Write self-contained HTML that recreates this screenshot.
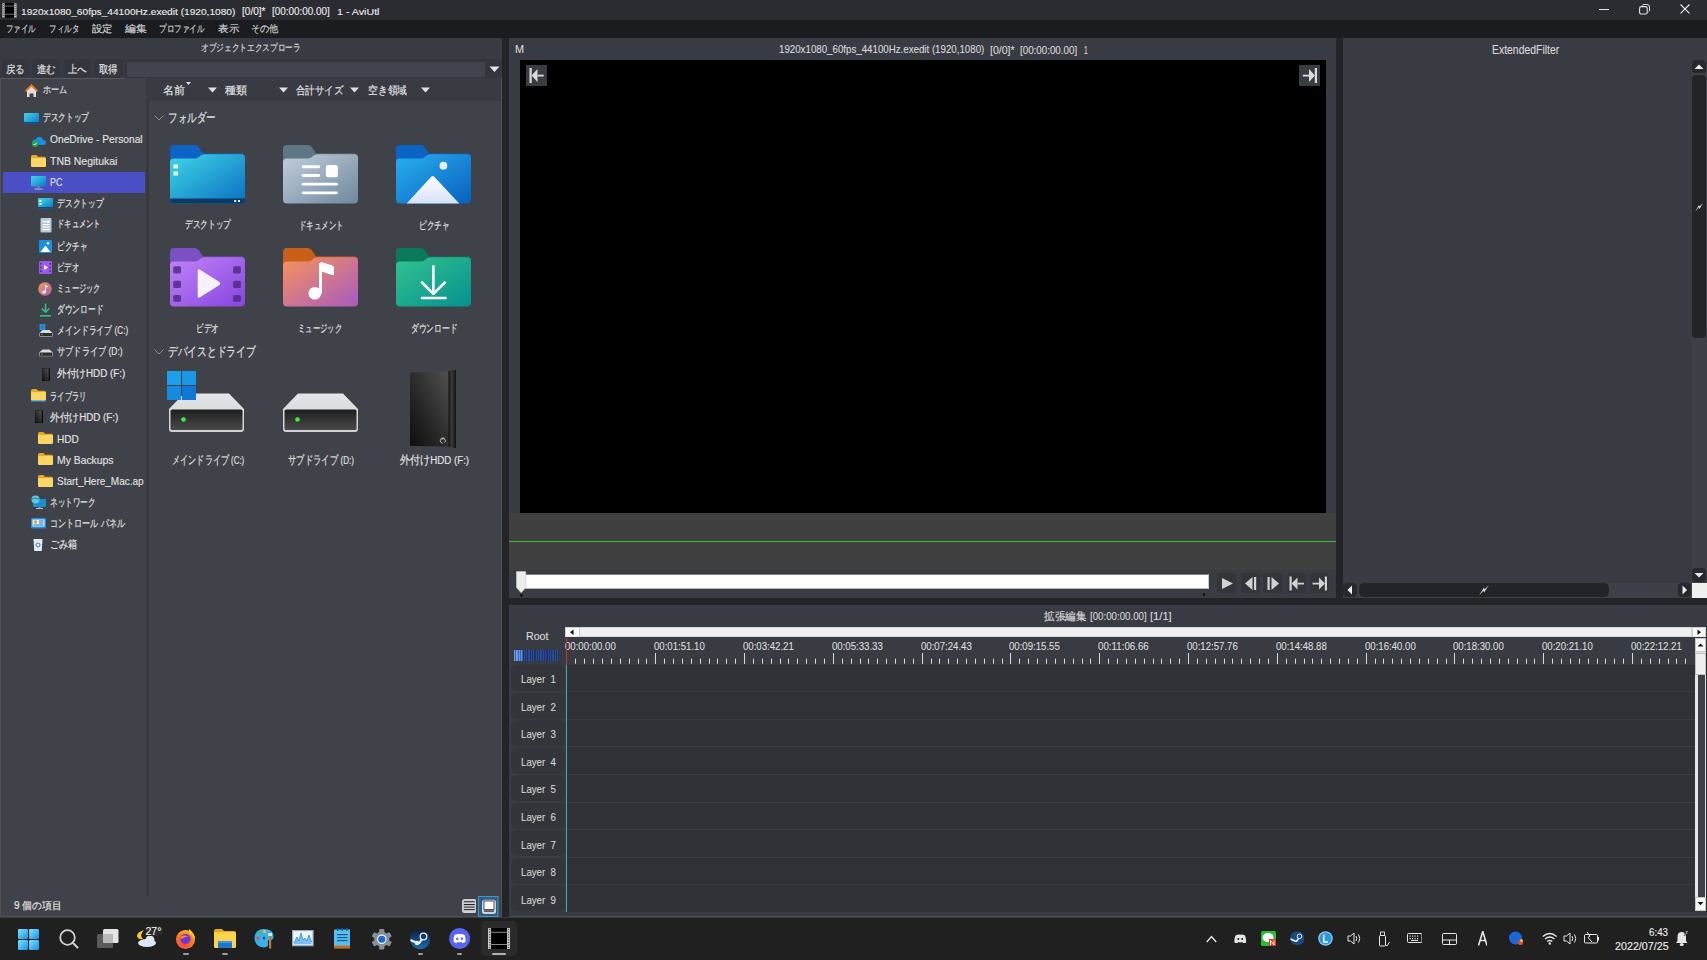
<!DOCTYPE html>
<html><head><meta charset="utf-8">
<style>
*{box-sizing:border-box;margin:0;padding:0}
html,body{width:1707px;height:960px;overflow:hidden;background:#222428;font-family:"Liberation Sans",sans-serif;color:#dcdcdc;font-size:12px}
.a{position:absolute}
.t{position:absolute;white-space:nowrap;line-height:1;transform-origin:0 0}
.j{-webkit-text-stroke:0.18px currentColor}
.l{-webkit-text-stroke:0.12px currentColor}
</style></head><body>
<div class="a" style="left:0px;top:0px;width:1707px;height:20px;background:#2b2c31;"></div>
<svg class="a" style="left:1.5px;top:2.5px;" width="15" height="15" viewBox="0 0 15 15"><rect x="0.4" y="0.2" width="2.4" height="14.5" fill="#c8c8c8"/><rect x="12.1" y="0.2" width="2.4" height="14.5" fill="#c8c8c8"/><rect x="2.8" y="0.2" width="9.3" height="14.5" fill="#000"/><rect x="2.8" y="2.6" width="9.3" height="0.9" fill="#7a7a7a"/><rect x="2.8" y="10.7" width="9.3" height="0.9" fill="#7a7a7a"/><rect x="1" y="0.9" width="1.2" height="1" fill="#555"/><rect x="12.7" y="0.9" width="1.2" height="1" fill="#555"/><rect x="1" y="3.1" width="1.2" height="1" fill="#555"/><rect x="12.7" y="3.1" width="1.2" height="1" fill="#555"/><rect x="1" y="5.3" width="1.2" height="1" fill="#555"/><rect x="12.7" y="5.3" width="1.2" height="1" fill="#555"/><rect x="1" y="7.5" width="1.2" height="1" fill="#555"/><rect x="12.7" y="7.5" width="1.2" height="1" fill="#555"/><rect x="1" y="9.7" width="1.2" height="1" fill="#555"/><rect x="12.7" y="9.7" width="1.2" height="1" fill="#555"/><rect x="1" y="11.9" width="1.2" height="1" fill="#555"/><rect x="12.7" y="11.9" width="1.2" height="1" fill="#555"/><rect x="1" y="14.1" width="1.2" height="1" fill="#555"/><rect x="12.7" y="14.1" width="1.2" height="1" fill="#555"/></svg>
<div class="t l" style="left:21.00px;top:6.72px;font-size:9.86px;color:#ececec;font-family:'Liberation Sans',sans-serif;font-weight:normal;transform:scaleX(1.0308);">1920x1080_60fps_44100Hz.exedit (1920,1080)</div>
<div class="t l" style="left:242.00px;top:6.52px;font-size:10.10px;color:#ececec;font-family:'Liberation Sans',sans-serif;font-weight:normal;transform:scaleX(0.9967);">[0/0]*</div>
<div class="t l" style="left:272.00px;top:6.52px;font-size:10.10px;color:#ececec;font-family:'Liberation Sans',sans-serif;font-weight:normal;transform:scaleX(0.9790);">[00:00:00.00]</div>
<div class="t l" style="left:337.00px;top:6.72px;font-size:9.86px;color:#ececec;font-family:'Liberation Sans',sans-serif;font-weight:normal;transform:scaleX(1.0837);">1 - AviUtl</div>
<div class="a" style="left:1599px;top:9px;width:10px;height:1px;background:#e6e6e6;"></div>
<svg class="a" style="left:1638.5px;top:4px;" width="11" height="10.5" viewBox="0 0 11 10.5"><rect x="0.6" y="2.6" width="7.6" height="7.4" rx="1.6" fill="none" stroke="#e6e6e6" stroke-width="1.1"/><path d="M3 1.6 Q3.4 0.5 5 0.5 H8 Q10.5 0.5 10.5 3 V6 Q10.5 7.4 9.6 7.8" fill="none" stroke="#e6e6e6" stroke-width="0.95"/></svg>
<svg class="a" style="left:1680px;top:4px;" width="10" height="9.8" viewBox="0 0 10 9.8"><path d="M0.5 0.5 L9.5 9.3 M9.5 0.5 L0.5 9.3" stroke="#eeeeee" stroke-width="1.1"/></svg>
<div class="a" style="left:0px;top:20px;width:1707px;height:18px;background:#1b1c20;"></div>
<div class="t j" style="left:6.20px;top:24.00px;font-size:10.41px;color:#d4d4d4;font-family:'Liberation Sans',sans-serif;font-weight:normal;transform:scaleX(0.7450);">ファイル</div>
<div class="t j" style="left:48.90px;top:24.00px;font-size:10.41px;color:#d4d4d4;font-family:'Liberation Sans',sans-serif;font-weight:normal;transform:scaleX(0.7525);">フィルタ</div>
<div class="t j" style="left:91.70px;top:24.00px;font-size:10.41px;color:#d4d4d4;font-family:'Liberation Sans',sans-serif;font-weight:normal;transform:scaleX(1.0400);">設定</div>
<div class="t j" style="left:125.00px;top:24.00px;font-size:10.41px;color:#d4d4d4;font-family:'Liberation Sans',sans-serif;font-weight:normal;transform:scaleX(1.0850);">編集</div>
<div class="t j" style="left:159.00px;top:24.00px;font-size:10.41px;color:#d4d4d4;font-family:'Liberation Sans',sans-serif;font-weight:normal;transform:scaleX(0.7617);">プロファイル</div>
<div class="t j" style="left:218.00px;top:24.00px;font-size:10.41px;color:#d4d4d4;font-family:'Liberation Sans',sans-serif;font-weight:normal;transform:scaleX(1.0500);">表示</div>
<div class="t j" style="left:251.00px;top:24.00px;font-size:10.41px;color:#d4d4d4;font-family:'Liberation Sans',sans-serif;font-weight:normal;transform:scaleX(0.9200);">その他</div>
<div class="a" style="left:0px;top:38px;width:502px;height:879px;background:#383b42;"></div>
<div class="t j" style="left:201.30px;top:42.90px;font-size:10.41px;color:#dadada;font-family:'Liberation Sans',sans-serif;font-weight:normal;transform:scaleX(0.7677);">オブジェクトエクスプローラ</div>
<div class="a" style="left:1px;top:59px;width:28px;height:19px;background:#33363c;border-radius:5px"></div>
<div class="t j" style="left:6.00px;top:64.00px;font-size:10.71px;color:#e2e2e2;font-family:'Liberation Sans',sans-serif;font-weight:normal;transform:scaleX(0.8636);">戻る</div>
<div class="a" style="left:32px;top:59px;width:28px;height:19px;background:#33363c;border-radius:5px"></div>
<div class="t j" style="left:37.00px;top:64.00px;font-size:10.71px;color:#e2e2e2;font-family:'Liberation Sans',sans-serif;font-weight:normal;transform:scaleX(0.8636);">進む</div>
<div class="a" style="left:63px;top:59px;width:28px;height:19px;background:#33363c;border-radius:5px"></div>
<div class="t j" style="left:68.00px;top:64.00px;font-size:10.71px;color:#e2e2e2;font-family:'Liberation Sans',sans-serif;font-weight:normal;transform:scaleX(0.8636);">上へ</div>
<div class="a" style="left:94px;top:59px;width:29px;height:19px;background:#33363c;border-radius:5px"></div>
<div class="t j" style="left:99.00px;top:64.00px;font-size:10.71px;color:#e2e2e2;font-family:'Liberation Sans',sans-serif;font-weight:normal;transform:scaleX(0.8636);">取得</div>
<div class="a" style="left:124px;top:59px;width:378px;height:19px;background:#33363c;border-radius:5px"></div>
<div class="a" style="left:127px;top:62px;width:358px;height:14.5px;background:#41444c;"></div>
<svg class="a" style="left:489px;top:66px;" width="11" height="7" viewBox="0 0 11 7"><path d="M0.5 0.5 H10.5 L5.5 6 Z" fill="#dfe6ee"/></svg>
<div class="a" style="left:1px;top:78px;width:501px;height:838px;background:#3f4249;"></div>
<div class="a" style="left:1px;top:78px;width:123px;height:1px;background:#55585e;"></div>
<div class="a" style="left:146px;top:78px;width:3px;height:818px;background:#383a41;"></div>
<div class="a" style="left:149px;top:78px;width:353px;height:23px;background:#383b42;"></div>
<div class="a" style="left:0px;top:78px;width:1px;height:839px;background:#505257;"></div>
<div class="a" style="left:501px;top:78px;width:1px;height:839px;background:#505257;"></div>
<div class="a" style="left:0px;top:916px;width:502px;height:1px;background:#505257;"></div>
<div class="t j" style="left:163.00px;top:84.50px;font-size:10.71px;color:#e2e2e2;font-family:'Liberation Sans',sans-serif;font-weight:normal;">名前</div>
<svg class="a" style="left:208px;top:87px;" width="9" height="6" viewBox="0 0 9 6"><path d="M0 0.5 H9 L4.5 5.5 Z" fill="#e0e0e0"/></svg>
<div class="t j" style="left:225.00px;top:84.50px;font-size:10.71px;color:#e2e2e2;font-family:'Liberation Sans',sans-serif;font-weight:normal;">種類</div>
<svg class="a" style="left:279px;top:87px;" width="9" height="6" viewBox="0 0 9 6"><path d="M0 0.5 H9 L4.5 5.5 Z" fill="#e0e0e0"/></svg>
<div class="t j" style="left:296.00px;top:84.50px;font-size:10.71px;color:#e2e2e2;font-family:'Liberation Sans',sans-serif;font-weight:normal;transform:scaleX(0.8545);">合計サイズ</div>
<svg class="a" style="left:350px;top:87px;" width="9" height="6" viewBox="0 0 9 6"><path d="M0 0.5 H9 L4.5 5.5 Z" fill="#e0e0e0"/></svg>
<div class="t j" style="left:368.00px;top:84.50px;font-size:10.71px;color:#e2e2e2;font-family:'Liberation Sans',sans-serif;font-weight:normal;transform:scaleX(0.8864);">空き領域</div>
<svg class="a" style="left:421px;top:87px;" width="9" height="6" viewBox="0 0 9 6"><path d="M0 0.5 H9 L4.5 5.5 Z" fill="#e0e0e0"/></svg>
<svg class="a" style="left:186px;top:82px;" width="5" height="4" viewBox="0 0 5 4"><path d="M0 0 H5 L2.5 3 Z" fill="#e0e0e0"/></svg>
<div class="a" style="left:3px;top:171.5px;width:142px;height:21.3px;background:#4a4fc6;"></div>
<svg class="a" style="left:24px;top:83px;" width="15" height="14" viewBox="0 0 15 14"><path d="M7.5 1 L14 7.5 L12.5 9 L7.5 4 L2.5 9 L1 7.5 Z" fill="#f07c14"/><path d="M3 8 L7.5 3.8 L12 8 V14 H9.5 V10.5 H5.5 V14 H3 Z" fill="#dedede"/></svg>
<div class="t j" style="left:42.80px;top:84.60px;font-size:9.59px;color:#e2e2e2;font-family:'Liberation Sans',sans-serif;font-weight:normal;transform:scaleX(0.8033);">ホーム</div>
<svg class="a" style="left:24px;top:113px;" width="15" height="11" viewBox="0 0 15 11"><defs><linearGradient id="dk" x1="0" y1="0" x2="1" y2="1"><stop offset="0" stop-color="#45d8e8"/><stop offset="1" stop-color="#0b76c8"/></linearGradient></defs><rect x="0" y="0" width="15" height="10.5" rx="1.2" fill="url(#dk)"/><rect x="0" y="9" width="15" height="1.5" fill="#0a4a80"/></svg>
<div class="t j" style="left:42.80px;top:112.30px;font-size:11.12px;color:#e2e2e2;font-family:'Liberation Sans',sans-serif;font-weight:normal;transform:scaleX(0.6970);">デスクトップ</div>
<svg class="a" style="left:31px;top:135px;" width="15" height="12" viewBox="0 0 15 12"><path d="M4 9 Q1 9 1.5 6 Q2 4 4.5 4.5 Q6 1 9.5 2 Q12 3 12 5 Q15 5 15 8 Q15 10 12.5 10 H4 Z" fill="#1e8fe0"/><circle cx="4" cy="9" r="3" fill="#1fae3a"/><path d="M2.5 9 L3.6 10.1 L5.6 7.8" stroke="#fff" stroke-width="0.9" fill="none"/></svg>
<div class="t l" style="left:50.10px;top:134.18px;font-size:11.20px;color:#e2e2e2;font-family:'Liberation Sans',sans-serif;font-weight:normal;transform:scaleX(0.9136);">OneDrive - Personal</div>
<svg class="a" style="left:31px;top:155px;" width="15" height="12" viewBox="0 0 15 12"><path d="M0 1.5 Q0 0 1.5 0 H5.5 L7 1.8 H13.5 Q15 1.8 15 3.3 V5 H0 Z" fill="#e9a91a"/><rect x="0" y="3" width="15" height="9" rx="1.2" fill="#fcd664"/></svg>
<div class="t l" style="left:50.10px;top:156.28px;font-size:11.20px;color:#e2e2e2;font-family:'Liberation Sans',sans-serif;font-weight:normal;transform:scaleX(0.9345);">TNB Negitukai</div>
<svg class="a" style="left:31px;top:176px;" width="15" height="14" viewBox="0 0 15 14"><defs><linearGradient id="pcg" x1="0" y1="0" x2="1" y2="1"><stop offset="0" stop-color="#45d8e8"/><stop offset="1" stop-color="#0b76c8"/></linearGradient></defs><rect x="0" y="0" width="15" height="10.5" rx="1" fill="url(#pcg)"/><rect x="6.5" y="10.5" width="2" height="2" fill="#888"/><rect x="3.5" y="12.5" width="8" height="1.2" fill="#aaa"/></svg>
<div class="t l" style="left:50.10px;top:177.48px;font-size:11.20px;color:#e2e2e2;font-family:'Liberation Sans',sans-serif;font-weight:normal;transform:scaleX(0.7976);">PC</div>
<svg class="a" style="left:38px;top:198px;" width="15" height="11" viewBox="0 0 15 11"><rect x="0" y="0" width="15" height="10.5" rx="1.2" fill="url(#dk)"/><rect x="1.5" y="2" width="2" height="2" fill="#fff"/><rect x="1.5" y="5" width="2" height="2" fill="#fff"/><rect x="0" y="9" width="15" height="1.5" fill="#0a4a80"/></svg>
<div class="t j" style="left:56.70px;top:197.60px;font-size:11.12px;color:#e2e2e2;font-family:'Liberation Sans',sans-serif;font-weight:normal;transform:scaleX(0.7061);">デスクトップ</div>
<svg class="a" style="left:40px;top:218px;" width="12" height="15" viewBox="0 0 12 15"><rect x="0.5" y="0" width="11" height="14.5" rx="1" fill="#b9c8d8"/><g fill="#fff"><rect x="2.5" y="3" width="4" height="1.2"/><rect x="7" y="2.5" width="2.5" height="2.5"/><rect x="2.5" y="6" width="7" height="1.1"/><rect x="2.5" y="8.5" width="7" height="1.1"/><rect x="2.5" y="11" width="7" height="1.1"/></g></svg>
<div class="t j" style="left:57.40px;top:219.10px;font-size:10.20px;color:#e2e2e2;font-family:'Liberation Sans',sans-serif;font-weight:normal;transform:scaleX(0.7283);">ドキュメント</div>
<svg class="a" style="left:39px;top:240px;" width="13" height="13" viewBox="0 0 13 13"><rect x="0" y="0" width="13" height="13" rx="1" fill="#1a8fe0"/><path d="M1.5 12 L6.5 5.5 L11.5 12 Z" fill="#fff"/><circle cx="9" cy="3.3" r="1.2" fill="#fff"/></svg>
<div class="t j" style="left:57.40px;top:240.50px;font-size:10.71px;color:#e2e2e2;font-family:'Liberation Sans',sans-serif;font-weight:normal;transform:scaleX(0.6841);">ピクチャ</div>
<svg class="a" style="left:39px;top:261px;" width="13" height="13" viewBox="0 0 13 13"><rect x="0" y="0" width="13" height="13" rx="1.2" fill="#9b5ae8"/><g fill="#4f2a7e"><rect x="1" y="2" width="1.6" height="1.6"/><rect x="1" y="5.7" width="1.6" height="1.6"/><rect x="1" y="9.4" width="1.6" height="1.6"/><rect x="10.4" y="2" width="1.6" height="1.6"/><rect x="10.4" y="5.7" width="1.6" height="1.6"/><rect x="10.4" y="9.4" width="1.6" height="1.6"/></g><path d="M5 4 L9 6.5 L5 9 Z" fill="#fff"/></svg>
<div class="t j" style="left:57.40px;top:261.50px;font-size:10.71px;color:#e2e2e2;font-family:'Liberation Sans',sans-serif;font-weight:normal;transform:scaleX(0.6636);">ビデオ</div>
<svg class="a" style="left:38px;top:282px;" width="14" height="14" viewBox="0 0 14 14"><defs><linearGradient id="mg" x1="0" y1="0" x2="1" y2="1"><stop offset="0" stop-color="#f59a5a"/><stop offset="1" stop-color="#b05ab0"/></linearGradient></defs><circle cx="7" cy="7" r="6.8" fill="url(#mg)"/><ellipse cx="6" cy="10" rx="1.8" ry="1.5" fill="#fff"/><rect x="7" y="3" width="1" height="7" fill="#fff"/><path d="M7.5 3 L10 4.5 L9.5 5.5 L7.5 4.5Z" fill="#fff"/></svg>
<div class="t j" style="left:57.40px;top:283.30px;font-size:10.82px;color:#e2e2e2;font-family:'Liberation Sans',sans-serif;font-weight:normal;transform:scaleX(0.6606);">ミュージック</div>
<svg class="a" style="left:39px;top:303px;" width="13" height="14" viewBox="0 0 13 14"><g stroke="#2ec08f" stroke-width="1.6" fill="none"><path d="M6.5 0.5 V9"/><path d="M2.8 5.5 L6.5 9.2 L10.2 5.5"/><path d="M1 12.8 H12"/></g></svg>
<div class="t j" style="left:57.40px;top:303.90px;font-size:11.33px;color:#e2e2e2;font-family:'Liberation Sans',sans-serif;font-weight:normal;transform:scaleX(0.7045);">ダウンロード</div>
<svg class="a" style="left:38.5px;top:324px;" width="14" height="13" viewBox="0 0 14 13"><g fill="#1a98e8"><rect x="0.5" y="0" width="2.8" height="2.8"/><rect x="3.6" y="0" width="2.8" height="2.8"/><rect x="0.5" y="3.1" width="2.8" height="2.8"/><rect x="3.6" y="3.1" width="2.8" height="2.8"/></g><path d="M3.5 6 H10.5 L13.5 9 V12.5 H0.5 V9 Z" fill="#d9dadd"/><rect x="1" y="9" width="12" height="3" fill="#2e2e2e"/><circle cx="3" cy="10.5" r="0.6" fill="#3f3"/></svg>
<div class="t j" style="left:57.40px;top:324.90px;font-size:11.33px;color:#e2e2e2;font-family:'Liberation Sans',sans-serif;font-weight:normal;transform:scaleX(0.7180);">メインドライブ (C:)</div>
<svg class="a" style="left:38.5px;top:349.3px;" width="14" height="8" viewBox="0 0 14 8"><path d="M3.5 0.5 H10.5 L13.5 3.3 V7.3 H0.5 V3.3 Z" fill="#d9dadd"/><rect x="1" y="3.5" width="12" height="3.4" fill="#2e2e2e"/><circle cx="3" cy="5.2" r="0.6" fill="#3f3"/></svg>
<div class="t j" style="left:57.40px;top:345.80px;font-size:11.43px;color:#e2e2e2;font-family:'Liberation Sans',sans-serif;font-weight:normal;transform:scaleX(0.7437);">サブドライブ (D:)</div>
<svg class="a" style="left:41.5px;top:367.7px;" width="8" height="13" viewBox="0 0 8 13"><defs><linearGradient id="hdg" x1="1" y1="0" x2="0" y2="1"><stop offset="0" stop-color="#505050"/><stop offset="1" stop-color="#111"/></linearGradient></defs><rect x="0" y="0.3" width="8" height="12.7" rx="0.8" fill="#0c0c0c"/><rect x="0.3" y="0.6" width="6.4" height="12" rx="0.6" fill="url(#hdg)"/></svg>
<div class="t j" style="left:57.40px;top:367.70px;font-size:11.22px;color:#e2e2e2;font-family:'Liberation Sans',sans-serif;font-weight:normal;transform:scaleX(0.8770);">外付けHDD (F:)</div>
<svg class="a" style="left:31px;top:389px;" width="15" height="13" viewBox="0 0 15 13"><path d="M0 1.5 Q0 0 1.5 0 H5.5 L7 1.8 H13.5 Q15 1.8 15 3.3 V5 H0 Z" fill="#e9a91a"/><rect x="0" y="3" width="15" height="9" rx="1.2" fill="#fcd664"/><rect x="0" y="11.5" width="15" height="1.5" fill="#1a7ad6"/></svg>
<div class="t j" style="left:50.10px;top:390.50px;font-size:10.71px;color:#e2e2e2;font-family:'Liberation Sans',sans-serif;font-weight:normal;transform:scaleX(0.6618);">ライブラリ</div>
<svg class="a" style="left:34.6px;top:410px;" width="8" height="13" viewBox="0 0 8 13"><defs><linearGradient id="hdg" x1="1" y1="0" x2="0" y2="1"><stop offset="0" stop-color="#505050"/><stop offset="1" stop-color="#111"/></linearGradient></defs><rect x="0" y="0.3" width="8" height="12.7" rx="0.8" fill="#0c0c0c"/><rect x="0.3" y="0.6" width="6.4" height="12" rx="0.6" fill="url(#hdg)"/></svg>
<div class="t j" style="left:50.10px;top:411.70px;font-size:11.02px;color:#e2e2e2;font-family:'Liberation Sans',sans-serif;font-weight:normal;transform:scaleX(0.8863);">外付けHDD (F:)</div>
<svg class="a" style="left:38px;top:432px;" width="15" height="12" viewBox="0 0 15 12"><path d="M0 1.5 Q0 0 1.5 0 H5.5 L7 1.8 H13.5 Q15 1.8 15 3.3 V5 H0 Z" fill="#e9a91a"/><rect x="0" y="3" width="15" height="9" rx="1.2" fill="#fcd664"/></svg>
<div class="t l" style="left:57.40px;top:433.58px;font-size:11.20px;color:#e2e2e2;font-family:'Liberation Sans',sans-serif;font-weight:normal;transform:scaleX(0.9031);">HDD</div>
<svg class="a" style="left:38px;top:453px;" width="15" height="12" viewBox="0 0 15 12"><path d="M0 1.5 Q0 0 1.5 0 H5.5 L7 1.8 H13.5 Q15 1.8 15 3.3 V5 H0 Z" fill="#e9a91a"/><rect x="0" y="3" width="15" height="9" rx="1.2" fill="#fcd664"/></svg>
<div class="t l" style="left:57.40px;top:454.68px;font-size:11.20px;color:#e2e2e2;font-family:'Liberation Sans',sans-serif;font-weight:normal;transform:scaleX(0.9272);">My Backups</div>
<svg class="a" style="left:38px;top:475px;" width="15" height="12" viewBox="0 0 15 12"><path d="M0 1.5 Q0 0 1.5 0 H5.5 L7 1.8 H13.5 Q15 1.8 15 3.3 V5 H0 Z" fill="#e9a91a"/><rect x="0" y="3" width="15" height="9" rx="1.2" fill="#fcd664"/></svg>
<div class="t l" style="left:57.40px;top:475.98px;font-size:11.20px;color:#e2e2e2;font-family:'Liberation Sans',sans-serif;font-weight:normal;transform:scaleX(0.8926);">Start_Here_Mac.ap</div>
<svg class="a" style="left:31px;top:495px;" width="15" height="14" viewBox="0 0 15 14"><rect x="2" y="4" width="13" height="8" rx="1" fill="#1a8fd0"/><circle cx="4.5" cy="4.5" r="4" fill="#5ac8f0"/><path d="M1 4 Q4 2 8 4" stroke="#2a8a4a" stroke-width="1" fill="none"/><rect x="7.5" y="12" width="2" height="1.5" fill="#999"/><rect x="5" y="13" width="7" height="1" fill="#bbb"/></svg>
<div class="t j" style="left:50.10px;top:496.50px;font-size:10.71px;color:#e2e2e2;font-family:'Liberation Sans',sans-serif;font-weight:normal;transform:scaleX(0.6909);">ネットワーク</div>
<svg class="a" style="left:31px;top:518px;" width="15" height="11" viewBox="0 0 15 11"><rect x="0" y="0" width="15" height="10.5" rx="1" fill="#1e90e0"/><rect x="1.5" y="1.5" width="12" height="7" fill="#e8f4ff"/><circle cx="4.5" cy="4" r="1.8" fill="#f0a030"/><rect x="8" y="2.5" width="4.5" height="1" fill="#1e70c0"/><rect x="8" y="4.5" width="4.5" height="1" fill="#1e70c0"/><rect x="2.5" y="6.5" width="10" height="1" fill="#1e70c0"/></svg>
<div class="t j" style="left:50.10px;top:518.00px;font-size:10.71px;color:#e2e2e2;font-family:'Liberation Sans',sans-serif;font-weight:normal;transform:scaleX(0.7325);">コントロール パネル</div>
<svg class="a" style="left:33px;top:538px;" width="10" height="13" viewBox="0 0 10 13"><path d="M0.5 1 H9.5 L8.8 12.5 Q8.7 13 8 13 H2 Q1.3 13 1.2 12.5 Z" fill="#e8ecf0"/><circle cx="5" cy="7" r="2" fill="none" stroke="#1e88e0" stroke-width="1"/></svg>
<div class="t j" style="left:50.10px;top:538.90px;font-size:10.82px;color:#e2e2e2;font-family:'Liberation Sans',sans-serif;font-weight:normal;transform:scaleX(0.8273);">ごみ箱</div>
<svg class="a" style="left:154px;top:115px;" width="10" height="6" viewBox="0 0 10 6"><path d="M0.5 0.5 L5 5 L9.5 0.5" stroke="#8a8d94" stroke-width="1" fill="none"/></svg>
<div class="t j" style="left:167.50px;top:112.20px;font-size:12.96px;color:#e2e2e2;font-family:'Liberation Sans',sans-serif;font-weight:normal;transform:scaleX(0.7338);">フォルダー</div>
<svg class="a" style="left:170px;top:144.5px;" width="75" height="59" viewBox="0 0 75 59"><defs><linearGradient id="g1" x1="0" y1="0" x2="1" y2="1"><stop offset="0" stop-color="#3fd6e3"/><stop offset="1" stop-color="#0a6fc6"/></linearGradient></defs><path d="M0 4 Q0 0 4 0 H25 Q27 0 28.5 1.8 L33 8.6 H71 Q75 8.6 75 12.6 V40 H0 Z" fill="#0e63c6"/><path d="M0 17.5 Q0 13.6 4 13.6 H25 Q27 13.6 28.5 12.2 L31 10.2 Q33 9.2 35 9.2 H71 Q75 9.2 75 13.2 V54.5 Q75 58.5 71 58.5 H4 Q0 58.5 0 54.5 Z" fill="url(#g1)"/><path d="M0 53.5 H75 V54.5 Q75 58.5 71 58.5 H4 Q0 58.5 0 54.5 Z" fill="#0b3a66"/><rect x="3.4" y="19.5" width="4.7" height="4" fill="#e8f6ff"/><rect x="3.4" y="26.5" width="4.7" height="4" fill="#e8f6ff"/><rect x="64.2" y="55" width="2" height="2" fill="#e8f6ff"/><rect x="68" y="55" width="2" height="2" fill="#e8f6ff"/></svg>
<svg class="a" style="left:283px;top:144.5px;" width="75" height="59" viewBox="0 0 75 59"><defs><linearGradient id="g2" x1="0" y1="0" x2="1" y2="1"><stop offset="0" stop-color="#c2cfdc"/><stop offset="1" stop-color="#6f879e"/></linearGradient></defs><path d="M0 4 Q0 0 4 0 H25 Q27 0 28.5 1.8 L33 8.6 H71 Q75 8.6 75 12.6 V40 H0 Z" fill="#5f7684"/><path d="M0 17.5 Q0 13.6 4 13.6 H25 Q27 13.6 28.5 12.2 L31 10.2 Q33 9.2 35 9.2 H71 Q75 9.2 75 13.2 V54.5 Q75 58.5 71 58.5 H4 Q0 58.5 0 54.5 Z" fill="url(#g2)"/><g fill="#ffffff"><rect x="18.7" y="20.3" width="18.4" height="2.9" rx="1.45"/><rect x="18.7" y="29" width="18.4" height="2.9" rx="1.45"/><rect x="18.7" y="37.7" width="36.2" height="2.9" rx="1.45"/><rect x="18.7" y="46.4" width="36.2" height="2.9" rx="1.45"/><rect x="42.9" y="19.9" width="12" height="12.4" rx="2.2"/></g></svg>
<svg class="a" style="left:395.5px;top:144.5px;" width="75" height="59" viewBox="0 0 75 59"><defs><linearGradient id="g3" x1="0" y1="0" x2="1" y2="1"><stop offset="0" stop-color="#2ab0f0"/><stop offset="1" stop-color="#0760bf"/></linearGradient></defs><path d="M0 4 Q0 0 4 0 H25 Q27 0 28.5 1.8 L33 8.6 H71 Q75 8.6 75 12.6 V40 H0 Z" fill="#0b63c4"/><path d="M0 17.5 Q0 13.6 4 13.6 H25 Q27 13.6 28.5 12.2 L31 10.2 Q33 9.2 35 9.2 H71 Q75 9.2 75 13.2 V54.5 Q75 58.5 71 58.5 H4 Q0 58.5 0 54.5 Z" fill="url(#g3)"/><defs><linearGradient id="g4" x1="0" y1="0" x2="0" y2="1"><stop offset="0" stop-color="#ffffff"/><stop offset="1" stop-color="#d6e2f8"/></linearGradient></defs><path d="M10.6 58.5 L35.2 31.8 Q36.7 30.2 38.2 31.8 L63.2 58.5 Z" fill="url(#g4)"/><circle cx="47.4" cy="20.7" r="3.9" fill="#e8eef8"/></svg>
<svg class="a" style="left:170px;top:248.3px;" width="75" height="59" viewBox="0 0 75 59"><defs><linearGradient id="g5" x1="0" y1="0" x2="1" y2="1"><stop offset="0" stop-color="#c084f8"/><stop offset="1" stop-color="#8644de"/></linearGradient></defs><path d="M0 4 Q0 0 4 0 H25 Q27 0 28.5 1.8 L33 8.6 H71 Q75 8.6 75 12.6 V40 H0 Z" fill="#7b50c2"/><path d="M0 17.5 Q0 13.6 4 13.6 H25 Q27 13.6 28.5 12.2 L31 10.2 Q33 9.2 35 9.2 H71 Q75 9.2 75 13.2 V54.5 Q75 58.5 71 58.5 H4 Q0 58.5 0 54.5 Z" fill="url(#g5)"/><g fill="#4a2a80" opacity="0.8"><rect x="3.2" y="18.2" width="7.8" height="7.3" rx="1.5"/><rect x="3.2" y="32.7" width="7.8" height="7.3" rx="1.5"/><rect x="3.2" y="47" width="7.8" height="6.8" rx="1.5"/><rect x="63.1" y="18.2" width="7.8" height="7.3" rx="1.5"/><rect x="63.1" y="32.7" width="7.8" height="7.3" rx="1.5"/><rect x="63.1" y="47" width="7.8" height="6.8" rx="1.5"/></g><path d="M27.7 23 Q27.7 20.5 30 21.8 L49.5 34 Q51 35.5 49.5 37 L30 49.2 Q27.7 50.5 27.7 48 Z" fill="#f6f2ff"/></svg>
<svg class="a" style="left:283px;top:248.3px;" width="75" height="59" viewBox="0 0 75 59"><defs><linearGradient id="g6" x1="0" y1="0" x2="1" y2="1"><stop offset="0" stop-color="#f7935a"/><stop offset="1" stop-color="#a85ac0"/></linearGradient></defs><path d="M0 4 Q0 0 4 0 H25 Q27 0 28.5 1.8 L33 8.6 H71 Q75 8.6 75 12.6 V40 H0 Z" fill="#c8601a"/><path d="M0 17.5 Q0 13.6 4 13.6 H25 Q27 13.6 28.5 12.2 L31 10.2 Q33 9.2 35 9.2 H71 Q75 9.2 75 13.2 V54.5 Q75 58.5 71 58.5 H4 Q0 58.5 0 54.5 Z" fill="url(#g6)"/><g fill="#ffffff"><circle cx="31.8" cy="45.3" r="6.3"/><rect x="36" y="15.5" width="3" height="30"/><path d="M36.5 15.5 Q37 13.8 39 14.3 L49.5 17.5 Q51 18 51 20 V25.5 Q51 27.5 49 27 L38.5 23.5 Z"/></g></svg>
<svg class="a" style="left:395.5px;top:248.3px;" width="75" height="59" viewBox="0 0 75 59"><defs><linearGradient id="g7" x1="0" y1="0" x2="1" y2="1"><stop offset="0" stop-color="#33c291"/><stop offset="1" stop-color="#05918f"/></linearGradient></defs><path d="M0 4 Q0 0 4 0 H25 Q27 0 28.5 1.8 L33 8.6 H71 Q75 8.6 75 12.6 V40 H0 Z" fill="#0b7a5a"/><path d="M0 17.5 Q0 13.6 4 13.6 H25 Q27 13.6 28.5 12.2 L31 10.2 Q33 9.2 35 9.2 H71 Q75 9.2 75 13.2 V54.5 Q75 58.5 71 58.5 H4 Q0 58.5 0 54.5 Z" fill="url(#g7)"/><g fill="none" stroke="#ffffff" stroke-width="2.6" stroke-linecap="round" stroke-linejoin="round"><path d="M37.4 18.2 V45.8"/><path d="M26 34.5 L37.4 45.9 L48.8 34.5"/><path d="M26 50 H49.6"/></g></svg>
<div class="t j" style="left:184.80px;top:219.30px;font-size:11.43px;color:#e2e2e2;font-family:'Liberation Sans',sans-serif;font-weight:normal;transform:scaleX(0.6970);">デスクトップ</div>
<div class="t j" style="left:298.50px;top:219.50px;font-size:11.22px;color:#e2e2e2;font-family:'Liberation Sans',sans-serif;font-weight:normal;transform:scaleX(0.6788);">ドキュメント</div>
<div class="t j" style="left:418.70px;top:219.50px;font-size:11.22px;color:#e2e2e2;font-family:'Liberation Sans',sans-serif;font-weight:normal;transform:scaleX(0.6932);">ピクチャ</div>
<div class="t j" style="left:196.20px;top:323.00px;font-size:11.43px;color:#e2e2e2;font-family:'Liberation Sans',sans-serif;font-weight:normal;transform:scaleX(0.6909);">ビデオ</div>
<div class="t j" style="left:298.30px;top:323.00px;font-size:11.43px;color:#e2e2e2;font-family:'Liberation Sans',sans-serif;font-weight:normal;transform:scaleX(0.6682);">ミュージック</div>
<div class="t j" style="left:410.70px;top:323.00px;font-size:11.43px;color:#e2e2e2;font-family:'Liberation Sans',sans-serif;font-weight:normal;transform:scaleX(0.7045);">ダウンロード</div>
<svg class="a" style="left:154px;top:349px;" width="10" height="6" viewBox="0 0 10 6"><path d="M0.5 0.5 L5 5 L9.5 0.5" stroke="#8a8d94" stroke-width="1" fill="none"/></svg>
<div class="t j" style="left:167.60px;top:346.20px;font-size:12.86px;color:#e2e2e2;font-family:'Liberation Sans',sans-serif;font-weight:normal;transform:scaleX(0.7487);">デバイスとドライブ</div>
<svg class="a" style="left:167px;top:369px;" width="80" height="64" viewBox="0 0 80 64"><defs><linearGradient id="g8" x1="0" y1="0" x2="0" y2="1"><stop offset="0" stop-color="#1e1e1e"/><stop offset="1" stop-color="#4a4a4a"/></linearGradient><linearGradient id="g9" x1="0" y1="0" x2="0" y2="1"><stop offset="0" stop-color="#e4e5e8"/><stop offset="1" stop-color="#cfd0d4"/></linearGradient></defs><path d="M17 24.5 H62 L77 40 V60 Q77 63 74 63 H5 Q2 63 2 60 V40 Z" fill="url(#g9)"/><rect x="3.5" y="40.5" width="72" height="20.5" rx="1.5" fill="url(#g8)"/><circle cx="16.5" cy="50.5" r="2.3" fill="#3df03d"/><g><rect x="0" y="2" width="14" height="14" fill="#1ca0ec"/><rect x="15" y="2" width="14" height="14" fill="#1a98e8"/><rect x="0" y="17" width="14" height="14" fill="#148ae0"/><rect x="15" y="17" width="14" height="14" fill="#0f78d4"/></g></svg>
<svg class="a" style="left:281px;top:369px;" width="80" height="64" viewBox="0 0 80 64"><defs><linearGradient id="g10" x1="0" y1="0" x2="0" y2="1"><stop offset="0" stop-color="#1e1e1e"/><stop offset="1" stop-color="#4a4a4a"/></linearGradient><linearGradient id="g11" x1="0" y1="0" x2="0" y2="1"><stop offset="0" stop-color="#e4e5e8"/><stop offset="1" stop-color="#cfd0d4"/></linearGradient></defs><path d="M17 24.5 H62 L77 40 V60 Q77 63 74 63 H5 Q2 63 2 60 V40 Z" fill="url(#g11)"/><rect x="3.5" y="40.5" width="72" height="20.5" rx="1.5" fill="url(#g10)"/><circle cx="16.5" cy="50.5" r="2.3" fill="#3df03d"/></svg>
<svg class="a" style="left:409px;top:369px;" width="48" height="80" viewBox="0 0 48 80"><defs><linearGradient id="g12" x1="1" y1="0" x2="0" y2="1"><stop offset="0" stop-color="#505050"/><stop offset="0.6" stop-color="#262626"/><stop offset="1" stop-color="#0e0e0e"/></linearGradient><linearGradient id="g13" x1="0" y1="0" x2="1" y2="0"><stop offset="0" stop-color="#0a0a0a"/><stop offset="0.5" stop-color="#3a3a3a"/><stop offset="1" stop-color="#121212"/></linearGradient></defs><path d="M38.5 2.5 L46 0.7 Q47 0.7 47 2 V78 Q47 79.2 46 79.2 L38.5 77.5 Z" fill="url(#g13)"/><path d="M2.5 3.2 L39.4 2.4 V77.4 L2.5 77 Q1 77 1 75.5 V4.7 Q1 3.2 2.5 3.2 Z" fill="url(#g12)"/><path d="M35.5 69.5 a2.6 2.6 0 1 0 -1.8 4.6 M32.5 70.5 a2.2 2.2 0 1 1 3.2 3" fill="none" stroke="#d0d0d0" stroke-width="0.9"/></svg>
<div class="t j" style="left:171.70px;top:454.40px;font-size:11.63px;color:#e2e2e2;font-family:'Liberation Sans',sans-serif;font-weight:normal;transform:scaleX(0.6772);">メインドライブ (C:)</div>
<div class="t j" style="left:287.80px;top:454.40px;font-size:11.63px;color:#e2e2e2;font-family:'Liberation Sans',sans-serif;font-weight:normal;transform:scaleX(0.6976);">サブドライブ (D:)</div>
<div class="t j" style="left:399.50px;top:454.40px;font-size:11.63px;color:#e2e2e2;font-family:'Liberation Sans',sans-serif;font-weight:normal;transform:scaleX(0.8376);">外付けHDD (F:)</div>
<div class="t j" style="left:13.70px;top:901.20px;font-size:10.31px;color:#e2e2e2;font-family:'Liberation Sans',sans-serif;font-weight:normal;transform:scaleX(0.9734);">9 個の項目</div>
<svg class="a" style="left:461.5px;top:899px;" width="14.5" height="14" viewBox="0 0 14.5 14"><rect x="0" y="0" width="14.5" height="14" rx="2.5" fill="#cfd0d3"/><g fill="#222"><rect x="1.8" y="2.2" width="11" height="1"/><rect x="1.8" y="5" width="11" height="1.1"/><rect x="1.8" y="7.6" width="11" height="1"/><rect x="1.8" y="10.1" width="11" height="1"/></g></svg>
<svg class="a" style="left:478px;top:896px;" width="20.5" height="21" viewBox="0 0 20.5 21"><rect x="0.5" y="0.5" width="19.5" height="20" fill="#365a78" stroke="#2a9ee0" stroke-width="1"/><rect x="4" y="3.7" width="14" height="14.2" rx="2.5" fill="#cdd3da"/><rect x="6" y="5" width="10" height="8.5" fill="#fff" stroke="#444" stroke-width="0.9"/><rect x="6" y="14.5" width="10" height="1.1" fill="#111"/></svg>
<div class="a" style="left:509px;top:38px;width:827px;height:560px;background:#383b42;"></div>
<div class="t l" style="left:515.30px;top:43.54px;font-size:11.83px;color:#d8d8d8;font-family:'Liberation Sans',sans-serif;font-weight:normal;transform:scaleX(0.9230);">M</div>
<div class="t l" style="left:778.90px;top:44.24px;font-size:11.13px;color:#d8d8d8;font-family:'Liberation Sans',sans-serif;font-weight:normal;transform:scaleX(0.8734);">1920x1080_60fps_44100Hz.exedit (1920,1080)</div>
<div class="t l" style="left:990.40px;top:44.69px;font-size:10.60px;color:#d8d8d8;font-family:'Liberation Sans',sans-serif;font-weight:normal;transform:scaleX(0.9939);">[0/0]*</div>
<div class="t l" style="left:1020.30px;top:44.69px;font-size:10.60px;color:#d8d8d8;font-family:'Liberation Sans',sans-serif;font-weight:normal;transform:scaleX(0.9231);">[00:00:00.00]</div>
<div class="t l" style="left:1083.60px;top:44.69px;font-size:10.60px;color:#d8d8d8;font-family:'Liberation Sans',sans-serif;font-weight:normal;transform:scaleX(0.6434);">1</div>
<div class="a" style="left:509px;top:513px;width:827px;height:57px;background:#404040;"></div>
<div class="a" style="left:520px;top:60px;width:806px;height:453px;background:#000000;"></div>
<div class="a" style="left:509px;top:541px;width:827px;height:1px;background:#30c030;"></div>
<svg class="a" style="left:525.5px;top:65px;" width="21.5" height="21" viewBox="0 0 21.5 21"><rect x="0" y="0" width="21.5" height="21" fill="#393c43"/><rect x="3.5" y="3" width="2.2" height="15" fill="#dcdcdc"/><path d="M5.6 10.5 L11.5 4 V17 Z" fill="#dcdcdc"/><rect x="11.5" y="9.7" width="6.2" height="1.8" fill="#dcdcdc"/></svg>
<svg class="a" style="left:1298.7px;top:65px;" width="21.5" height="21" viewBox="0 0 21.5 21"><rect x="0" y="0" width="21.5" height="21" fill="#393c43"/><rect x="15.8" y="3" width="2.2" height="15" fill="#dcdcdc"/><path d="M15.9 10.5 L10 4 V17 Z" fill="#dcdcdc"/><rect x="3.8" y="9.7" width="6.2" height="1.8" fill="#dcdcdc"/></svg>
<div class="a" style="left:509px;top:570px;width:827px;height:28px;background:#393c43;"></div>
<div class="a" style="left:525px;top:573.6px;width:684px;height:15.8px;background:#ffffff;border-top:1.5px solid #7c7c7c;border-bottom:1px solid #b8b8b8;border-right:1px solid #c8c8c8"></div>
<svg class="a" style="left:516px;top:571px;" width="11" height="26" viewBox="0 0 11 26"><path d="M0.5 0.6 H9.8 V16.5 L5.2 21.8 L0.5 16.5 Z" fill="#ededed" stroke="#c8c8c8" stroke-width="0.6"/><path d="M3.3 24.5 L5.3 22.6 L7.3 24.5 L5.3 26 Z" fill="#111"/></svg>
<div class="a" style="left:1203px;top:593px;width:1.5px;height:3px;background:#111;"></div>
<svg class="a" style="left:1216.9px;top:573px;" width="19.5" height="20" viewBox="0 0 19.5 20"><rect x="0" y="0" width="19.5" height="20" rx="4" fill="#33353b"/><path d="M5 5 L16 10.5 L5 16 Z" fill="#d2d2d2"/></svg>
<svg class="a" style="left:1240.6px;top:573px;" width="19.5" height="20" viewBox="0 0 19.5 20"><rect x="0" y="0" width="19.5" height="20" rx="4" fill="#33353b"/><path d="M4 10.5 L11.5 4 V17 Z" fill="#d2d2d2"/><rect x="13" y="4" width="2.2" height="13" fill="#d2d2d2"/></svg>
<svg class="a" style="left:1263.3px;top:573px;" width="19.5" height="20" viewBox="0 0 19.5 20"><rect x="0" y="0" width="19.5" height="20" rx="4" fill="#33353b"/><rect x="4.5" y="4" width="2.2" height="13" fill="#d2d2d2"/><path d="M8.5 4 L16 10.5 L8.5 17 Z" fill="#d2d2d2"/></svg>
<svg class="a" style="left:1286.9px;top:573px;" width="19.5" height="20" viewBox="0 0 19.5 20"><rect x="0" y="0" width="19.5" height="20" rx="4" fill="#33353b"/><rect x="2.5" y="3.5" width="2.2" height="14" fill="#d2d2d2"/><path d="M4.6 10.5 L10.5 4.5 V16.5 Z" fill="#d2d2d2"/><rect x="10.5" y="9.7" width="6.5" height="1.8" fill="#d2d2d2"/></svg>
<svg class="a" style="left:1309.6px;top:573px;" width="19.5" height="20" viewBox="0 0 19.5 20"><rect x="0" y="0" width="19.5" height="20" rx="4" fill="#33353b"/><rect x="14.8" y="3.5" width="2.2" height="14" fill="#d2d2d2"/><path d="M14.9 10.5 L9 4.5 V16.5 Z" fill="#d2d2d2"/><rect x="2.5" y="9.7" width="6.5" height="1.8" fill="#d2d2d2"/></svg>
<div class="a" style="left:1343px;top:38px;width:364px;height:560px;background:#383b42;"></div>
<div class="t l" style="left:1492.00px;top:43.56px;font-size:12.39px;color:#d8d8d8;font-family:'Liberation Sans',sans-serif;font-weight:normal;transform:scaleX(0.8421);">ExtendedFilter</div>
<div class="a" style="left:1692px;top:60px;width:15px;height:523px;background:#3d4047;"></div>
<svg class="a" style="left:1692px;top:59.5px;" width="14" height="13.5" viewBox="0 0 14 13.5"><rect x="0" y="0" width="14" height="13.5" rx="4" fill="#26282c"/><path d="M2.5 9 L7 4.5 L11.5 9 Z" fill="#e8eef4"/></svg>
<div class="a" style="left:1692px;top:75px;width:14px;height:262.5px;background:#232428;border-radius:4px"></div>
<svg class="a" style="left:1692px;top:200px;" width="14" height="14" viewBox="0 0 14 14"><path d="M3 12 L7 7 L7.5 9 L11 3 L7.5 6.5 L7 5 Z" fill="#e8e8e8"/></svg>
<svg class="a" style="left:1692px;top:568px;" width="14" height="14" viewBox="0 0 14 14"><rect x="0" y="0" width="14" height="14" rx="4" fill="#26282c"/><path d="M2.5 5 L7 9.5 L11.5 5 Z" fill="#e8eef4"/></svg>
<div class="a" style="left:1343px;top:583px;width:349px;height:15px;background:#3d4047;"></div>
<svg class="a" style="left:1343px;top:583px;" width="14" height="14" viewBox="0 0 14 14"><rect x="0" y="0" width="14" height="14" rx="4" fill="#26282c"/><path d="M9 2.5 L4.5 7 L9 11.5 Z" fill="#e8eef4"/></svg>
<div class="a" style="left:1359.4px;top:583px;width:249.4px;height:14px;background:#232428;border-radius:5px"></div>
<svg class="a" style="left:1477px;top:583px;" width="14" height="14" viewBox="0 0 14 14"><path d="M2 12.5 L6.5 7.5 L7 9.5 L12 2 L7.5 6.5 L7 4.5 Z" fill="#e8e8e8"/></svg>
<svg class="a" style="left:1677.6px;top:583px;" width="13" height="14" viewBox="0 0 13 14"><rect x="0" y="0" width="13" height="14" rx="4" fill="#26282c"/><path d="M4.5 2.5 L9 7 L4.5 11.5 Z" fill="#e8eef4"/></svg>
<div class="a" style="left:1692px;top:583px;width:15px;height:15px;background:#f0f0f0;"></div>
<div class="a" style="left:509px;top:605px;width:1198px;height:312px;background:#383b42;"></div>
<div class="t j" style="left:1044.00px;top:610.80px;font-size:10.71px;color:#d8d8d8;font-family:'Liberation Sans',sans-serif;font-weight:normal;transform:scaleX(0.9591);">拡張編集</div>
<div class="t l" style="left:1089.50px;top:611.40px;font-size:11.41px;color:#d8d8d8;font-family:'Liberation Sans',sans-serif;font-weight:normal;transform:scaleX(0.8512);">[00:00:00.00]</div>
<div class="t l" style="left:1149.80px;top:611.40px;font-size:11.41px;color:#d8d8d8;font-family:'Liberation Sans',sans-serif;font-weight:normal;transform:scaleX(0.9773);">[1/1]</div>
<div class="t l" style="left:525.60px;top:631.10px;font-size:11.41px;color:#dedede;font-family:'Liberation Sans',sans-serif;font-weight:normal;transform:scaleX(0.9339);">Root</div>
<div class="a" style="left:513.75px;top:649.75px;width:45.6px;height:11.5px;background:repeating-linear-gradient(90deg,#2b4c92 0 1.2px,#1f3568 1.2px 2.4px)"></div>
<div class="a" style="left:513.75px;top:649.75px;width:9.6px;height:11.5px;background:repeating-linear-gradient(90deg,#6a9ae6 0 1.2px,#3a62b0 1.2px 2.4px)"></div>
<div class="a" style="left:565px;top:626.8px;width:1127px;height:10.6px;background:#f0f0f0;border:1px solid #d8d8d8"></div>
<svg class="a" style="left:565px;top:626.8px;" width="15" height="10.6" viewBox="0 0 15 10.6"><rect x="0.5" y="0.5" width="14" height="9.6" fill="#fafafa" stroke="#cfcfcf" stroke-width="1"/><path d="M8.5 2.5 L5 5.3 L8.5 8 Z" fill="#111"/></svg>
<svg class="a" style="left:1692px;top:626.8px;" width="14" height="10.6" viewBox="0 0 14 10.6"><rect x="0.5" y="0.5" width="13" height="9.6" fill="#fafafa" stroke="#cfcfcf" stroke-width="1"/><path d="M5.5 2.5 L9 5.3 L5.5 8 Z" fill="#111"/></svg>
<svg class="a" style="left:566px;top:653px;" width="1127" height="11" viewBox="0 0 1127 11"><rect x="9" y="5.6" width="1" height="5.2" fill="#d8d8d8"/><rect x="18" y="5.6" width="1" height="5.2" fill="#d8d8d8"/><rect x="27" y="5.6" width="1" height="5.2" fill="#d8d8d8"/><rect x="36" y="5.6" width="1" height="5.2" fill="#d8d8d8"/><rect x="45" y="5.6" width="1" height="5.2" fill="#d8d8d8"/><rect x="54" y="5.6" width="1" height="5.2" fill="#d8d8d8"/><rect x="63" y="5.6" width="1" height="5.2" fill="#d8d8d8"/><rect x="72" y="5.6" width="1" height="5.2" fill="#d8d8d8"/><rect x="80" y="5.6" width="1" height="5.2" fill="#d8d8d8"/><rect x="89" y="0" width="1" height="11" fill="#d8d8d8"/><rect x="98" y="5.6" width="1" height="5.2" fill="#d8d8d8"/><rect x="107" y="5.6" width="1" height="5.2" fill="#d8d8d8"/><rect x="116" y="5.6" width="1" height="5.2" fill="#d8d8d8"/><rect x="125" y="5.6" width="1" height="5.2" fill="#d8d8d8"/><rect x="134" y="5.6" width="1" height="5.2" fill="#d8d8d8"/><rect x="143" y="5.6" width="1" height="5.2" fill="#d8d8d8"/><rect x="151" y="5.6" width="1" height="5.2" fill="#d8d8d8"/><rect x="160" y="5.6" width="1" height="5.2" fill="#d8d8d8"/><rect x="169" y="5.6" width="1" height="5.2" fill="#d8d8d8"/><rect x="178" y="0" width="1" height="11" fill="#d8d8d8"/><rect x="187" y="5.6" width="1" height="5.2" fill="#d8d8d8"/><rect x="196" y="5.6" width="1" height="5.2" fill="#d8d8d8"/><rect x="205" y="5.6" width="1" height="5.2" fill="#d8d8d8"/><rect x="214" y="5.6" width="1" height="5.2" fill="#d8d8d8"/><rect x="222" y="5.6" width="1" height="5.2" fill="#d8d8d8"/><rect x="231" y="5.6" width="1" height="5.2" fill="#d8d8d8"/><rect x="240" y="5.6" width="1" height="5.2" fill="#d8d8d8"/><rect x="249" y="5.6" width="1" height="5.2" fill="#d8d8d8"/><rect x="258" y="5.6" width="1" height="5.2" fill="#d8d8d8"/><rect x="267" y="0" width="1" height="11" fill="#d8d8d8"/><rect x="276" y="5.6" width="1" height="5.2" fill="#d8d8d8"/><rect x="285" y="5.6" width="1" height="5.2" fill="#d8d8d8"/><rect x="294" y="5.6" width="1" height="5.2" fill="#d8d8d8"/><rect x="302" y="5.6" width="1" height="5.2" fill="#d8d8d8"/><rect x="311" y="5.6" width="1" height="5.2" fill="#d8d8d8"/><rect x="320" y="5.6" width="1" height="5.2" fill="#d8d8d8"/><rect x="329" y="5.6" width="1" height="5.2" fill="#d8d8d8"/><rect x="338" y="5.6" width="1" height="5.2" fill="#d8d8d8"/><rect x="347" y="5.6" width="1" height="5.2" fill="#d8d8d8"/><rect x="356" y="0" width="1" height="11" fill="#d8d8d8"/><rect x="365" y="5.6" width="1" height="5.2" fill="#d8d8d8"/><rect x="373" y="5.6" width="1" height="5.2" fill="#d8d8d8"/><rect x="382" y="5.6" width="1" height="5.2" fill="#d8d8d8"/><rect x="391" y="5.6" width="1" height="5.2" fill="#d8d8d8"/><rect x="400" y="5.6" width="1" height="5.2" fill="#d8d8d8"/><rect x="409" y="5.6" width="1" height="5.2" fill="#d8d8d8"/><rect x="418" y="5.6" width="1" height="5.2" fill="#d8d8d8"/><rect x="427" y="5.6" width="1" height="5.2" fill="#d8d8d8"/><rect x="436" y="5.6" width="1" height="5.2" fill="#d8d8d8"/><rect x="444" y="0" width="1" height="11" fill="#d8d8d8"/><rect x="453" y="5.6" width="1" height="5.2" fill="#d8d8d8"/><rect x="462" y="5.6" width="1" height="5.2" fill="#d8d8d8"/><rect x="471" y="5.6" width="1" height="5.2" fill="#d8d8d8"/><rect x="480" y="5.6" width="1" height="5.2" fill="#d8d8d8"/><rect x="489" y="5.6" width="1" height="5.2" fill="#d8d8d8"/><rect x="498" y="5.6" width="1" height="5.2" fill="#d8d8d8"/><rect x="507" y="5.6" width="1" height="5.2" fill="#d8d8d8"/><rect x="516" y="5.6" width="1" height="5.2" fill="#d8d8d8"/><rect x="524" y="5.6" width="1" height="5.2" fill="#d8d8d8"/><rect x="533" y="0" width="1" height="11" fill="#d8d8d8"/><rect x="542" y="5.6" width="1" height="5.2" fill="#d8d8d8"/><rect x="551" y="5.6" width="1" height="5.2" fill="#d8d8d8"/><rect x="560" y="5.6" width="1" height="5.2" fill="#d8d8d8"/><rect x="569" y="5.6" width="1" height="5.2" fill="#d8d8d8"/><rect x="578" y="5.6" width="1" height="5.2" fill="#d8d8d8"/><rect x="587" y="5.6" width="1" height="5.2" fill="#d8d8d8"/><rect x="595" y="5.6" width="1" height="5.2" fill="#d8d8d8"/><rect x="604" y="5.6" width="1" height="5.2" fill="#d8d8d8"/><rect x="613" y="5.6" width="1" height="5.2" fill="#d8d8d8"/><rect x="622" y="0" width="1" height="11" fill="#d8d8d8"/><rect x="631" y="5.6" width="1" height="5.2" fill="#d8d8d8"/><rect x="640" y="5.6" width="1" height="5.2" fill="#d8d8d8"/><rect x="649" y="5.6" width="1" height="5.2" fill="#d8d8d8"/><rect x="658" y="5.6" width="1" height="5.2" fill="#d8d8d8"/><rect x="666" y="5.6" width="1" height="5.2" fill="#d8d8d8"/><rect x="675" y="5.6" width="1" height="5.2" fill="#d8d8d8"/><rect x="684" y="5.6" width="1" height="5.2" fill="#d8d8d8"/><rect x="693" y="5.6" width="1" height="5.2" fill="#d8d8d8"/><rect x="702" y="5.6" width="1" height="5.2" fill="#d8d8d8"/><rect x="711" y="0" width="1" height="11" fill="#d8d8d8"/><rect x="720" y="5.6" width="1" height="5.2" fill="#d8d8d8"/><rect x="729" y="5.6" width="1" height="5.2" fill="#d8d8d8"/><rect x="738" y="5.6" width="1" height="5.2" fill="#d8d8d8"/><rect x="746" y="5.6" width="1" height="5.2" fill="#d8d8d8"/><rect x="755" y="5.6" width="1" height="5.2" fill="#d8d8d8"/><rect x="764" y="5.6" width="1" height="5.2" fill="#d8d8d8"/><rect x="773" y="5.6" width="1" height="5.2" fill="#d8d8d8"/><rect x="782" y="5.6" width="1" height="5.2" fill="#d8d8d8"/><rect x="791" y="5.6" width="1" height="5.2" fill="#d8d8d8"/><rect x="800" y="0" width="1" height="11" fill="#d8d8d8"/><rect x="809" y="5.6" width="1" height="5.2" fill="#d8d8d8"/><rect x="817" y="5.6" width="1" height="5.2" fill="#d8d8d8"/><rect x="826" y="5.6" width="1" height="5.2" fill="#d8d8d8"/><rect x="835" y="5.6" width="1" height="5.2" fill="#d8d8d8"/><rect x="844" y="5.6" width="1" height="5.2" fill="#d8d8d8"/><rect x="853" y="5.6" width="1" height="5.2" fill="#d8d8d8"/><rect x="862" y="5.6" width="1" height="5.2" fill="#d8d8d8"/><rect x="871" y="5.6" width="1" height="5.2" fill="#d8d8d8"/><rect x="880" y="5.6" width="1" height="5.2" fill="#d8d8d8"/><rect x="888" y="0" width="1" height="11" fill="#d8d8d8"/><rect x="897" y="5.6" width="1" height="5.2" fill="#d8d8d8"/><rect x="906" y="5.6" width="1" height="5.2" fill="#d8d8d8"/><rect x="915" y="5.6" width="1" height="5.2" fill="#d8d8d8"/><rect x="924" y="5.6" width="1" height="5.2" fill="#d8d8d8"/><rect x="933" y="5.6" width="1" height="5.2" fill="#d8d8d8"/><rect x="942" y="5.6" width="1" height="5.2" fill="#d8d8d8"/><rect x="951" y="5.6" width="1" height="5.2" fill="#d8d8d8"/><rect x="960" y="5.6" width="1" height="5.2" fill="#d8d8d8"/><rect x="968" y="5.6" width="1" height="5.2" fill="#d8d8d8"/><rect x="977" y="0" width="1" height="11" fill="#d8d8d8"/><rect x="986" y="5.6" width="1" height="5.2" fill="#d8d8d8"/><rect x="995" y="5.6" width="1" height="5.2" fill="#d8d8d8"/><rect x="1004" y="5.6" width="1" height="5.2" fill="#d8d8d8"/><rect x="1013" y="5.6" width="1" height="5.2" fill="#d8d8d8"/><rect x="1022" y="5.6" width="1" height="5.2" fill="#d8d8d8"/><rect x="1031" y="5.6" width="1" height="5.2" fill="#d8d8d8"/><rect x="1039" y="5.6" width="1" height="5.2" fill="#d8d8d8"/><rect x="1048" y="5.6" width="1" height="5.2" fill="#d8d8d8"/><rect x="1057" y="5.6" width="1" height="5.2" fill="#d8d8d8"/><rect x="1066" y="0" width="1" height="11" fill="#d8d8d8"/><rect x="1075" y="5.6" width="1" height="5.2" fill="#d8d8d8"/><rect x="1084" y="5.6" width="1" height="5.2" fill="#d8d8d8"/><rect x="1093" y="5.6" width="1" height="5.2" fill="#d8d8d8"/><rect x="1102" y="5.6" width="1" height="5.2" fill="#d8d8d8"/><rect x="1110" y="5.6" width="1" height="5.2" fill="#d8d8d8"/><rect x="1119" y="5.6" width="1" height="5.2" fill="#d8d8d8"/></svg>
<div class="t l" style="left:565.30px;top:641.42px;font-size:10.56px;color:#dcdcdc;font-family:'Liberation Sans',sans-serif;font-weight:normal;transform:scaleX(0.9117);">00:00:00.00</div>
<div class="t l" style="left:654.10px;top:641.42px;font-size:10.56px;color:#dcdcdc;font-family:'Liberation Sans',sans-serif;font-weight:normal;transform:scaleX(0.9117);">00:01:51.10</div>
<div class="t l" style="left:742.90px;top:641.42px;font-size:10.56px;color:#dcdcdc;font-family:'Liberation Sans',sans-serif;font-weight:normal;transform:scaleX(0.9117);">00:03:42.21</div>
<div class="t l" style="left:831.70px;top:641.42px;font-size:10.56px;color:#dcdcdc;font-family:'Liberation Sans',sans-serif;font-weight:normal;transform:scaleX(0.9117);">00:05:33.33</div>
<div class="t l" style="left:920.50px;top:641.42px;font-size:10.56px;color:#dcdcdc;font-family:'Liberation Sans',sans-serif;font-weight:normal;transform:scaleX(0.9117);">00:07:24.43</div>
<div class="t l" style="left:1009.30px;top:641.42px;font-size:10.56px;color:#dcdcdc;font-family:'Liberation Sans',sans-serif;font-weight:normal;transform:scaleX(0.9117);">00:09:15.55</div>
<div class="t l" style="left:1098.10px;top:641.42px;font-size:10.56px;color:#dcdcdc;font-family:'Liberation Sans',sans-serif;font-weight:normal;transform:scaleX(0.9247);">00:11:06.66</div>
<div class="t l" style="left:1186.90px;top:641.42px;font-size:10.56px;color:#dcdcdc;font-family:'Liberation Sans',sans-serif;font-weight:normal;transform:scaleX(0.9117);">00:12:57.76</div>
<div class="t l" style="left:1275.70px;top:641.42px;font-size:10.56px;color:#dcdcdc;font-family:'Liberation Sans',sans-serif;font-weight:normal;transform:scaleX(0.9117);">00:14:48.88</div>
<div class="t l" style="left:1364.50px;top:641.42px;font-size:10.56px;color:#dcdcdc;font-family:'Liberation Sans',sans-serif;font-weight:normal;transform:scaleX(0.9117);">00:16:40.00</div>
<div class="t l" style="left:1453.30px;top:641.42px;font-size:10.56px;color:#dcdcdc;font-family:'Liberation Sans',sans-serif;font-weight:normal;transform:scaleX(0.9117);">00:18:30.00</div>
<div class="t l" style="left:1542.10px;top:641.42px;font-size:10.56px;color:#dcdcdc;font-family:'Liberation Sans',sans-serif;font-weight:normal;transform:scaleX(0.9117);">00:20:21.10</div>
<div class="t l" style="left:1630.90px;top:641.42px;font-size:10.56px;color:#dcdcdc;font-family:'Liberation Sans',sans-serif;font-weight:normal;transform:scaleX(0.9117);">00:22:12.21</div>
<div class="a" style="left:566px;top:664.5px;width:1129px;height:247.5px;background:#2f3136;"></div>
<div class="a" style="left:510.6px;top:665.00px;width:54.4px;height:26px;background:#33353b;border-radius:6px"></div>
<div class="t l" style="left:520.60px;top:674.20px;font-size:11.41px;color:#d6d6d6;font-family:'Liberation Sans',sans-serif;font-weight:normal;transform:scaleX(0.8491);">Layer&nbsp; 1</div>
<div class="a" style="left:566px;top:691.3px;width:1129px;height:1px;background:#3a3c42;"></div>
<div class="a" style="left:510.6px;top:692.55px;width:54.4px;height:26px;background:#33353b;border-radius:6px"></div>
<div class="t l" style="left:520.60px;top:701.75px;font-size:11.41px;color:#d6d6d6;font-family:'Liberation Sans',sans-serif;font-weight:normal;transform:scaleX(0.8491);">Layer&nbsp; 2</div>
<div class="a" style="left:566px;top:718.85px;width:1129px;height:1px;background:#3a3c42;"></div>
<div class="a" style="left:510.6px;top:720.10px;width:54.4px;height:26px;background:#33353b;border-radius:6px"></div>
<div class="t l" style="left:520.60px;top:729.30px;font-size:11.41px;color:#d6d6d6;font-family:'Liberation Sans',sans-serif;font-weight:normal;transform:scaleX(0.8491);">Layer&nbsp; 3</div>
<div class="a" style="left:566px;top:746.4px;width:1129px;height:1px;background:#3a3c42;"></div>
<div class="a" style="left:510.6px;top:747.65px;width:54.4px;height:26px;background:#33353b;border-radius:6px"></div>
<div class="t l" style="left:520.60px;top:756.85px;font-size:11.41px;color:#d6d6d6;font-family:'Liberation Sans',sans-serif;font-weight:normal;transform:scaleX(0.8491);">Layer&nbsp; 4</div>
<div class="a" style="left:566px;top:773.95px;width:1129px;height:1px;background:#3a3c42;"></div>
<div class="a" style="left:510.6px;top:775.20px;width:54.4px;height:26px;background:#33353b;border-radius:6px"></div>
<div class="t l" style="left:520.60px;top:784.40px;font-size:11.41px;color:#d6d6d6;font-family:'Liberation Sans',sans-serif;font-weight:normal;transform:scaleX(0.8491);">Layer&nbsp; 5</div>
<div class="a" style="left:566px;top:801.5px;width:1129px;height:1px;background:#3a3c42;"></div>
<div class="a" style="left:510.6px;top:802.75px;width:54.4px;height:26px;background:#33353b;border-radius:6px"></div>
<div class="t l" style="left:520.60px;top:811.95px;font-size:11.41px;color:#d6d6d6;font-family:'Liberation Sans',sans-serif;font-weight:normal;transform:scaleX(0.8491);">Layer&nbsp; 6</div>
<div class="a" style="left:566px;top:829.05px;width:1129px;height:1px;background:#3a3c42;"></div>
<div class="a" style="left:510.6px;top:830.30px;width:54.4px;height:26px;background:#33353b;border-radius:6px"></div>
<div class="t l" style="left:520.60px;top:839.50px;font-size:11.41px;color:#d6d6d6;font-family:'Liberation Sans',sans-serif;font-weight:normal;transform:scaleX(0.8491);">Layer&nbsp; 7</div>
<div class="a" style="left:566px;top:856.6px;width:1129px;height:1px;background:#3a3c42;"></div>
<div class="a" style="left:510.6px;top:857.85px;width:54.4px;height:26px;background:#33353b;border-radius:6px"></div>
<div class="t l" style="left:520.60px;top:867.05px;font-size:11.41px;color:#d6d6d6;font-family:'Liberation Sans',sans-serif;font-weight:normal;transform:scaleX(0.8491);">Layer&nbsp; 8</div>
<div class="a" style="left:566px;top:884.15px;width:1129px;height:1px;background:#3a3c42;"></div>
<div class="a" style="left:510.6px;top:885.40px;width:54.4px;height:26px;background:#33353b;border-radius:6px"></div>
<div class="t l" style="left:520.60px;top:894.60px;font-size:11.41px;color:#d6d6d6;font-family:'Liberation Sans',sans-serif;font-weight:normal;transform:scaleX(0.8491);">Layer&nbsp; 9</div>
<div class="a" style="left:566px;top:911.7px;width:1129px;height:1px;background:#3a3c42;"></div>
<div class="a" style="left:566px;top:638px;width:1.2px;height:26.5px;background:#d03030;"></div>
<div class="a" style="left:566px;top:664.5px;width:1.4px;height:247.5px;background:#3fb0a8;"></div>
<div class="a" style="left:1705.8px;top:637.5px;width:1.2px;height:274px;background:#2a2c30;"></div>
<div class="a" style="left:1695px;top:638px;width:11px;height:273px;background:#e6e6e6;"></div>
<div class="a" style="left:1697.5px;top:675px;width:7px;height:222px;background:#3d4048;"></div>
<svg class="a" style="left:1695px;top:638.3px;" width="11" height="14" viewBox="0 0 11 14"><rect x="0.5" y="0.5" width="10" height="13" fill="#f8f8f8" stroke="#c8c8c8"/><path d="M2.5 8.5 L5.5 5.5 L8.5 8.5 Z" fill="#111"/></svg>
<svg class="a" style="left:1695px;top:652.8px;" width="11" height="22" viewBox="0 0 11 22"><rect x="0.5" y="0.5" width="10" height="21" fill="#f0f0f0" stroke="#c0c0c0"/></svg>
<svg class="a" style="left:1695px;top:897px;" width="11" height="14" viewBox="0 0 11 14"><rect x="0.5" y="0.5" width="10" height="13" fill="#f8f8f8" stroke="#c8c8c8"/><path d="M2.5 5 L5.5 8.3 L8.5 5 Z" fill="#111"/></svg>
<div class="a" style="left:0px;top:917px;width:1707px;height:43px;background:#202020;"></div>
<div class="a" style="left:509px;top:916px;width:1198px;height:1.5px;background:#4e4f52;"></div>
<div class="a" style="left:0px;top:917px;width:1707px;height:1px;background:#3a3a3c;"></div>
<svg class="a" style="left:18.3px;top:928.7px;" width="21" height="21" viewBox="0 0 21 21"><defs><linearGradient id="wl" x1="0" y1="0" x2="1" y2="1"><stop offset="0" stop-color="#7fe3ff"/><stop offset="1" stop-color="#1a90e0"/></linearGradient></defs><g fill="url(#wl)"><rect x="0" y="0" width="10" height="10" rx="1"/><rect x="11" y="0" width="10" height="10" rx="1"/><rect x="0" y="11" width="10" height="10" rx="1"/><rect x="11" y="11" width="10" height="10" rx="1"/></g></svg>
<svg class="a" style="left:58px;top:928px;" width="22" height="22" viewBox="0 0 22 22"><circle cx="9.5" cy="9.5" r="7.3" fill="none" stroke="#d0d0d0" stroke-width="1.8"/><path d="M14.5 14.5 L19.5 19.5" stroke="#d0d0d0" stroke-width="2" stroke-linecap="round"/></svg>
<svg class="a" style="left:96.5px;top:928.8px;" width="22" height="20" viewBox="0 0 22 20"><rect x="0" y="5" width="16" height="14" rx="1.5" fill="#5a5a5a"/><rect x="6" y="0" width="15.5" height="14" rx="1.5" fill="#e4e4e4"/><rect x="6" y="5" width="10" height="9" fill="#b8b8b8"/></svg>
<svg class="a" style="left:135px;top:926px;" width="28" height="22" viewBox="0 0 28 22"><path d="M9 4 Q4 9 8 13 Q3 14 2 10 Q2 6 9 4Z" fill="#f6c630"/><ellipse cx="12" cy="17" rx="9" ry="4" fill="#dce8f6"/><circle cx="15" cy="14" r="4.5" fill="#dce8f6"/><rect x="10" y="0" width="18" height="10" rx="5" fill="#2a2a2a"/></svg>
<div class="t l" style="left:145.50px;top:926.32px;font-size:10.56px;color:#f0f0f0;font-family:'Liberation Sans',sans-serif;font-weight:normal;">27°</div>
<svg class="a" style="left:175.2px;top:928px;" width="21.5" height="21" viewBox="0 0 21.5 21"><defs><radialGradient id="ff" cx="0.4" cy="0.7" r="0.8"><stop offset="0" stop-color="#ff3a5c"/><stop offset="0.6" stop-color="#ff7a1a"/><stop offset="1" stop-color="#ffd43a"/></radialGradient></defs><circle cx="10.5" cy="11.5" r="9.5" fill="url(#ff)"/><path d="M14 1 Q20 5 20 12 Q17 6 14 5 Z" fill="#ffcc2a"/><circle cx="10.5" cy="11" r="5" fill="#6a3ad0"/><path d="M5 9 Q9 6 14 9 Q10 8 7 11Z" fill="#ff8a2a"/></svg>
<div class="a" style="left:182.8px;top:953px;width:5.8px;height:2.4px;background:#9a9a9a;border-radius:1px"></div>
<svg class="a" style="left:214px;top:929px;" width="22" height="19" viewBox="0 0 22 19"><path d="M0 2 Q0 0 2 0 H8 L10 2 H20 Q22 2 22 4 V8 H0Z" fill="#e8a818"/><rect x="0" y="3" width="22" height="16" rx="1.5" fill="#fcd34a"/><rect x="4" y="12" width="14" height="7" rx="1" fill="#1a78d0"/><rect x="4" y="12" width="14" height="2" fill="#3a98f0"/></svg>
<div class="a" style="left:222.4px;top:953px;width:5.8px;height:2.4px;background:#9a9a9a;border-radius:1px"></div>
<svg class="a" style="left:254px;top:928.4px;" width="20.5" height="20.8" viewBox="0 0 20.5 20.8"><path d="M10 1 Q19 1 19.5 8 Q20 12 16 12 Q13 12 14 15 Q15 19 10 19.5 Q1 19 0.5 10 Q1 1 10 1Z" fill="#36b0f0"/><circle cx="4" cy="10" r="1.6" fill="#f04a3a"/><circle cx="6" cy="5" r="1.6" fill="#4ac04a"/><circle cx="10.5" cy="3.5" r="1.6" fill="#f8c030"/><circle cx="10" cy="10" r="1.2" fill="#1a3a5a"/><rect x="15" y="7" width="2.2" height="13.5" fill="#c07a2a"/><rect x="14.2" y="5" width="3.8" height="3" fill="#e8e0d0"/></svg>
<svg class="a" style="left:292.4px;top:930.3px;" width="21.6" height="16.3" viewBox="0 0 21.6 16.3"><rect x="0.5" y="0.5" width="20.6" height="15.3" fill="#dfe8f0" stroke="#9aaab8" stroke-width="1"/><rect x="2" y="2" width="17.6" height="12.3" fill="#eef6fc"/><path d="M2 13 L5 7 L7 11 L9 3 L11 10 L13 8 L15 11 L17 5 L19.6 12 V14.3 H2Z" fill="#7ac0f0"/><path d="M2 13 L5 7 L7 11 L9 3 L11 10 L13 8 L15 11 L17 5 L19.6 12" fill="none" stroke="#2a8ae0" stroke-width="0.8"/></svg>
<svg class="a" style="left:333.8px;top:928.4px;" width="16.6" height="20.6" viewBox="0 0 16.6 20.6"><rect x="0" y="1.5" width="16.6" height="18" rx="1" fill="#58c0f0"/><rect x="0" y="17.6" width="16.6" height="3" fill="#c86a20"/><g fill="#1a5a8a"><rect x="3" y="6" width="10.6" height="1.2"/><rect x="3" y="9" width="10.6" height="1.2"/><rect x="3" y="12" width="10.6" height="1.2"/><rect x="3" y="0" width="1.5" height="3"/><rect x="7.5" y="0" width="1.5" height="3"/><rect x="12" y="0" width="1.5" height="3"/></g></svg>
<svg class="a" style="left:370.5px;top:929px;" width="21.5" height="20.5" viewBox="0 0 21.5 20.5"><g transform="translate(10.75 10.25)"><g fill="#8a8f96"><rect x="-2.6" y="-10.2" width="5.2" height="5" rx="1" transform="rotate(0)"/><rect x="-2.6" y="-10.2" width="5.2" height="5" rx="1" transform="rotate(60)"/><rect x="-2.6" y="-10.2" width="5.2" height="5" rx="1" transform="rotate(120)"/><rect x="-2.6" y="-10.2" width="5.2" height="5" rx="1" transform="rotate(180)"/><rect x="-2.6" y="-10.2" width="5.2" height="5" rx="1" transform="rotate(240)"/><rect x="-2.6" y="-10.2" width="5.2" height="5" rx="1" transform="rotate(300)"/></g><circle r="7.6" fill="#8a8f96"/><circle r="4.8" fill="#f0f0f0"/><circle r="3.6" fill="#1a6ad0"/></g></svg>
<svg class="a" style="left:410px;top:929px;" width="20.3" height="20.3" viewBox="0 0 20.3 20.3"><defs><linearGradient id="st" x1="0" y1="0" x2="0" y2="1"><stop offset="0" stop-color="#111d3a"/><stop offset="1" stop-color="#1670b0"/></linearGradient></defs><circle cx="10.15" cy="10.15" r="10" fill="url(#st)"/><circle cx="13.5" cy="7.5" r="3.3" fill="none" stroke="#e8eef4" stroke-width="1.3"/><path d="M0.5 11 L7 14 Q9 15 10 13 L12 10" stroke="#e8eef4" stroke-width="2.2" fill="none"/><circle cx="7" cy="14" r="2.2" fill="#e8eef4"/></svg>
<div class="a" style="left:418px;top:953px;width:5.2px;height:2.4px;background:#9a9a9a;border-radius:1px"></div>
<svg class="a" style="left:449px;top:928px;" width="21.2" height="21" viewBox="0 0 21.2 21"><circle cx="10.6" cy="10.5" r="10.5" fill="#5865f2"/><path d="M5.5 7 Q8 5.5 10.6 6 Q13.2 5.5 15.7 7 Q17 10 16.5 14 Q15 15 13.5 15.2 L12.8 14 Q10.6 14.6 8.4 14 L7.7 15.2 Q6.2 15 4.7 14 Q4.2 10 5.5 7Z" fill="#ffffff"/><ellipse cx="8.3" cy="10.8" rx="1.2" ry="1.4" fill="#5865f2"/><ellipse cx="12.9" cy="10.8" rx="1.2" ry="1.4" fill="#5865f2"/></svg>
<div class="a" style="left:456.9px;top:953px;width:5.4px;height:2.4px;background:#9a9a9a;border-radius:1px"></div>
<div class="a" style="left:481px;top:921.3px;width:35.5px;height:35px;background:#2b2b2b;border-radius:5px"></div>
<svg class="a" style="left:488px;top:927.7px;" width="22.2" height="21.8" viewBox="0 0 22.2 21.8"><rect x="0" y="0" width="3.2" height="21.8" fill="#c8c8c8"/><rect x="19" y="0" width="3.2" height="21.8" fill="#c8c8c8"/><rect x="3.2" y="0" width="15.8" height="21.8" fill="#000"/><rect x="3.2" y="3.8" width="15.8" height="1" fill="#8a8a8a"/><rect x="3.2" y="16" width="15.8" height="1" fill="#8a8a8a"/><rect x="1" y="0.8" width="1.3" height="1.2" fill="#555"/><rect x="19.9" y="0.8" width="1.3" height="1.2" fill="#555"/><rect x="1" y="3.4" width="1.3" height="1.2" fill="#555"/><rect x="19.9" y="3.4" width="1.3" height="1.2" fill="#555"/><rect x="1" y="6.0" width="1.3" height="1.2" fill="#555"/><rect x="19.9" y="6.0" width="1.3" height="1.2" fill="#555"/><rect x="1" y="8.6" width="1.3" height="1.2" fill="#555"/><rect x="19.9" y="8.6" width="1.3" height="1.2" fill="#555"/><rect x="1" y="11.2" width="1.3" height="1.2" fill="#555"/><rect x="19.9" y="11.2" width="1.3" height="1.2" fill="#555"/><rect x="1" y="13.8" width="1.3" height="1.2" fill="#555"/><rect x="19.9" y="13.8" width="1.3" height="1.2" fill="#555"/><rect x="1" y="16.4" width="1.3" height="1.2" fill="#555"/><rect x="19.9" y="16.4" width="1.3" height="1.2" fill="#555"/><rect x="1" y="19.0" width="1.3" height="1.2" fill="#555"/><rect x="19.9" y="19.0" width="1.3" height="1.2" fill="#555"/></svg>
<div class="a" style="left:491.7px;top:953px;width:14.3px;height:2.4px;background:#b0b0b0;border-radius:1.2px"></div>
<svg class="a" style="left:1206px;top:935px;" width="11" height="8" viewBox="0 0 11 8"><path d="M0.8 7 L5.5 1.5 L10.2 7" fill="none" stroke="#e6e6e6" stroke-width="1.4"/></svg>
<svg class="a" style="left:1234px;top:933.5px;" width="12.5" height="9.5" viewBox="0 0 12.5 9.5"><path d="M1.5 1.5 Q4 0 6.25 0.7 Q8.5 0 11 1.5 Q12.5 5 12 8.5 Q10.5 9.5 9 9.5 L8.5 8 Q6.25 8.8 4 8 L3.5 9.5 Q2 9.5 0.5 8.5 Q0 5 1.5 1.5Z" fill="#e6e6e6"/><circle cx="4.3" cy="5" r="1" fill="#1c1c1c"/><circle cx="8.2" cy="5" r="1" fill="#1c1c1c"/></svg>
<svg class="a" style="left:1260.9px;top:931px;" width="15" height="15" viewBox="0 0 15 15"><rect x="0" y="0" width="15" height="15" rx="1.5" fill="#22c03a"/><ellipse cx="7" cy="6.5" rx="5.5" ry="4.5" fill="#fff"/><rect x="8" y="8" width="7" height="7" fill="#e83a2a"/><path d="M9.5 14 V9.5 L13 14 V9.5" stroke="#fff" stroke-width="0.9" fill="none"/></svg>
<svg class="a" style="left:1289.6px;top:931px;" width="14.5" height="14.5" viewBox="0 0 14.5 14.5"><circle cx="7.25" cy="7.25" r="7.1" fill="#1a4a80"/><circle cx="9.5" cy="5.3" r="2.3" fill="none" stroke="#e8eef4" stroke-width="1"/><path d="M0.5 8 L5 10 Q6.5 10.8 7.5 9 L8.5 7" stroke="#e8eef4" stroke-width="1.6" fill="none"/></svg>
<svg class="a" style="left:1318px;top:931px;" width="15" height="15" viewBox="0 0 15 15"><circle cx="7.5" cy="7.5" r="7.3" fill="#8ac8f0"/><circle cx="7.5" cy="7.5" r="6" fill="#2a98e0"/><path d="M5.8 3.5 V11 H10" stroke="#fff" stroke-width="1.4" fill="none"/></svg>
<svg class="a" style="left:1346.7px;top:931px;" width="15" height="15" viewBox="0 0 15 15"><path d="M1 5 H3.5 L7 2 V13 L3.5 10 H1Z" fill="none" stroke="#e6e6e6" stroke-width="1"/><path d="M9 5 Q10.5 7.5 9 10" stroke="#e6e6e6" stroke-width="1" fill="none"/><path d="M11.5 3.5 Q14 7.5 11.5 11.5" stroke="#e6e6e6" stroke-width="1" fill="none"/></svg>
<svg class="a" style="left:1377px;top:930.5px;" width="13" height="16" viewBox="0 0 13 16"><rect x="2.5" y="4.5" width="6" height="10.5" rx="1" fill="none" stroke="#e6e6e6" stroke-width="1"/><rect x="3.5" y="1" width="4" height="3.5" fill="none" stroke="#e6e6e6" stroke-width="0.9"/><path d="M8 13 L10 15 L12.5 11" stroke="#e6e6e6" stroke-width="0.9" fill="none"/></svg>
<svg class="a" style="left:1406.9px;top:933px;" width="15.5" height="10" viewBox="0 0 15.5 10"><rect x="0.5" y="0.5" width="14.5" height="9" rx="1" fill="none" stroke="#e6e6e6" stroke-width="1"/><g fill="#e6e6e6"><rect x="2.5" y="2.5" width="1.2" height="1.2"/><rect x="5" y="2.5" width="1.2" height="1.2"/><rect x="7.5" y="2.5" width="1.2" height="1.2"/><rect x="10" y="2.5" width="1.2" height="1.2"/><rect x="2.5" y="5" width="1.2" height="1.2"/><rect x="5" y="5" width="1.2" height="1.2"/><rect x="7.5" y="5" width="1.2" height="1.2"/><rect x="10" y="5" width="1.2" height="1.2"/><rect x="4" y="7" width="7" height="1"/></g></svg>
<svg class="a" style="left:1442.3px;top:932.5px;" width="15" height="12" viewBox="0 0 15 12"><rect x="0.5" y="0.5" width="14" height="11" rx="1" fill="none" stroke="#e6e6e6" stroke-width="1"/><path d="M0.5 7 H14.5 M7.5 7 V11.5" stroke="#e6e6e6" stroke-width="1"/></svg>
<svg class="a" style="left:1477.8px;top:931px;" width="9.5" height="15" viewBox="0 0 9.5 15"><path d="M0.5 14.5 L4.75 0.5 L9 14.5 M2.3 9.5 H7.2" stroke="#e6e6e6" stroke-width="1.6" fill="none"/></svg>
<svg class="a" style="left:1508.7px;top:931px;" width="14.5" height="15" viewBox="0 0 14.5 15"><circle cx="6.5" cy="7" r="6.5" fill="#1a68d8"/><circle cx="11.5" cy="11.5" r="2.6" fill="#e84a2a"/><circle cx="12.5" cy="9.5" r="1.5" fill="#f8c020"/></svg>
<svg class="a" style="left:1541.7px;top:932px;" width="15.5" height="13" viewBox="0 0 15.5 13"><path d="M0.8 4.5 Q7.75 -1.5 14.7 4.5" stroke="#e6e6e6" stroke-width="1.3" fill="none"/><path d="M3 7 Q7.75 3 12.5 7" stroke="#e6e6e6" stroke-width="1.3" fill="none"/><path d="M5.2 9.5 Q7.75 7.5 10.3 9.5" stroke="#e6e6e6" stroke-width="1.3" fill="none"/><circle cx="7.75" cy="11.5" r="1.2" fill="#e6e6e6"/></svg>
<svg class="a" style="left:1563.3px;top:931px;" width="15" height="15" viewBox="0 0 15 15"><path d="M1 5 H3.5 L7 2 V13 L3.5 10 H1Z" fill="none" stroke="#e6e6e6" stroke-width="1"/><path d="M9 5 Q10.5 7.5 9 10" stroke="#e6e6e6" stroke-width="1" fill="none"/><path d="M11.5 3.5 Q14 7.5 11.5 11.5" stroke="#e6e6e6" stroke-width="1" fill="none"/></svg>
<svg class="a" style="left:1584.3px;top:931px;" width="15.5" height="14" viewBox="0 0 15.5 14"><rect x="0.5" y="3.5" width="13" height="8.5" rx="1" fill="none" stroke="#e6e6e6" stroke-width="1"/><rect x="13.5" y="6" width="1.5" height="3.5" fill="#e6e6e6"/><path d="M3 1 L6 5 L4 6.5 L8 11" stroke="#e6e6e6" stroke-width="1" fill="none"/></svg>
<div class="t l" style="left:1649.00px;top:926.58px;font-size:10.85px;color:#ececec;font-family:'Liberation Sans',sans-serif;font-weight:normal;transform:scaleX(0.9001);">6:43</div>
<div class="t l" style="left:1614.60px;top:941.18px;font-size:10.85px;color:#ececec;font-family:'Liberation Sans',sans-serif;font-weight:normal;transform:scaleX(0.9893);">2022/07/25</div>
<svg class="a" style="left:1675.4px;top:930px;" width="13.5" height="17" viewBox="0 0 13.5 17"><path d="M6.75 2 Q11 2 11 7 V11 L12.5 13 H1 L2.5 11 V7 Q2.5 2 6.75 2Z" fill="#e6e6e6"/><ellipse cx="6.75" cy="14.5" rx="2" ry="1.5" fill="#e6e6e6"/><text x="8.5" y="6" font-size="5" fill="#1c1c1c" font-family="Liberation Sans">z</text><text x="10.5" y="4" font-size="4.5" fill="#e6e6e6" font-family="Liberation Sans">z</text></svg>
</body></html>
